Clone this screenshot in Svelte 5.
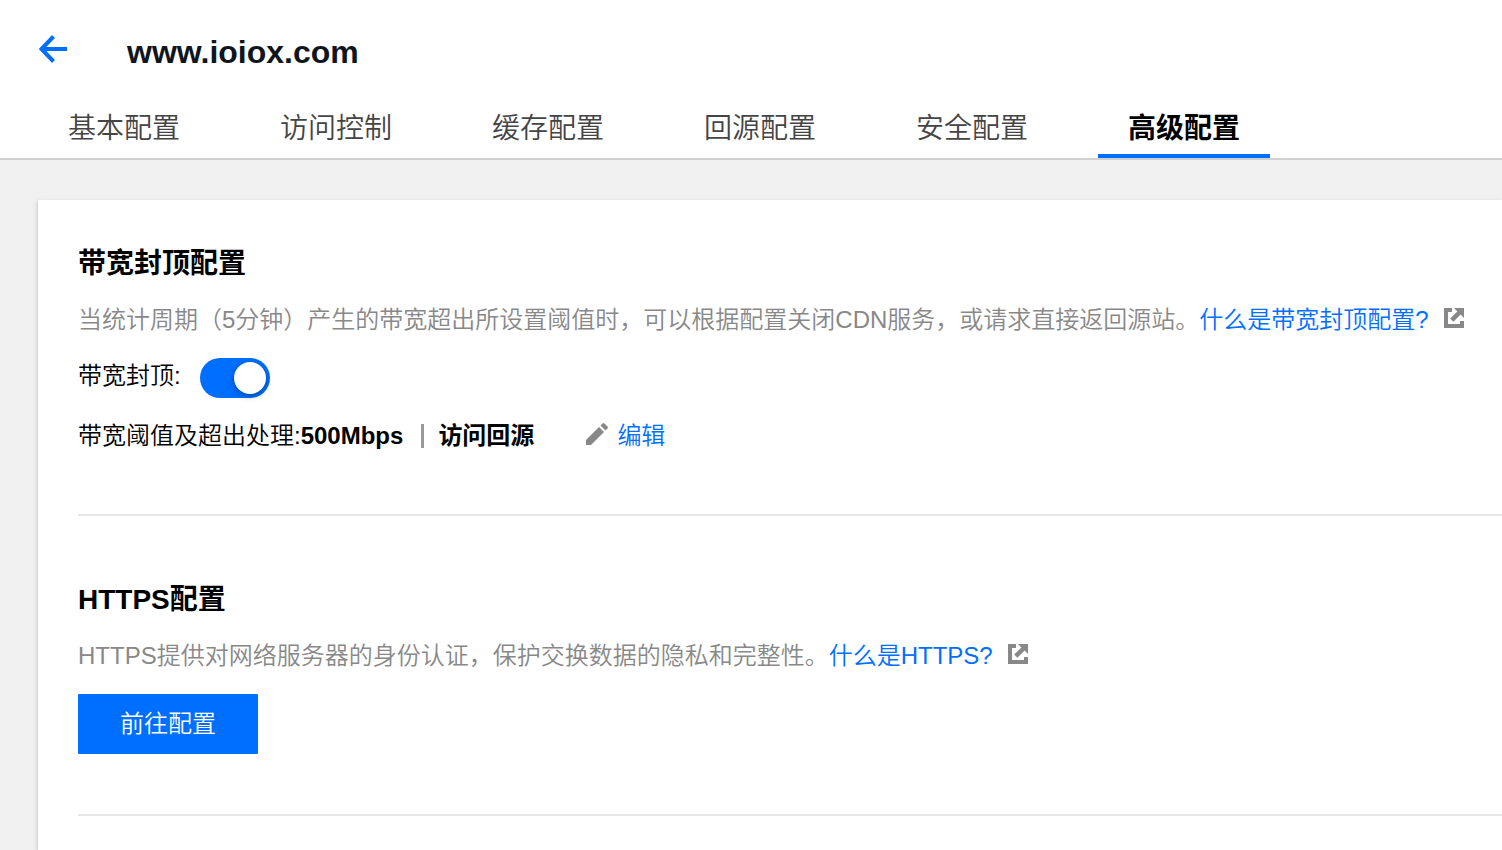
<script>
  const tabs = ['基本配置', '访问控制', '缓存配置', '回源配置', '安全配置', '高级配置'];
  let active = $state(5);
  let capped = $state(true);
</script>

{#snippet external()}
  <svg class="external" viewBox="0 0 20 20" width="20" height="20" aria-hidden="true">
    <path d="M0 0H8V4H4V16H16V13H20V20H0Z" />
    <path d="M10 0H20V10L16.6 6.600L9.400 13.800L6.200 10.600L13.400 3.400Z" />
  </svg>
{/snippet}

<div class="page">
  <header>
    <div class="heading">
      <button class="back" aria-label="返回">
        <svg viewBox="0 0 28 28" width="28" height="28" aria-hidden="true">
          <path d="M14.500 1.500L2.500 14L14.500 26.500M2.500 14H28" fill="none" stroke="currentColor" stroke-width="4" />
        </svg>
      </button>
      <h1>www.ioiox.com</h1>
    </div>
    <nav>
      {#each tabs as tab, i}
        <button class="tab" class:active={active === i} onclick={() => (active = i)}>{tab}</button>
      {/each}
    </nav>
  </header>

  <main>
    <section>
      <h2>带宽封顶配置</h2>
      <p class="desc">当统计周期（5分钟）产生的带宽超出所设置阈值时，可以根据配置关闭CDN服务，或请求直接返回源站。<a href="#bandwidth">什么是带宽封顶配置?{@render external()}</a></p>
      <div class="row switch-row">
        <label for="cap">带宽封顶:</label>
        <input id="cap" class="switch" type="checkbox" role="switch" bind:checked={capped} />
      </div>
      <div class="row">
        <span>带宽阈值及超出处理:</span><strong>500Mbps</strong>
        <span class="bar"></span>
        <strong>访问回源</strong>
        <button class="edit">
          <svg viewBox="0 0 22 22" width="22" height="22" aria-hidden="true">
            <path d="M0 22V17L13 4L18 9L5 22Z" />
            <path d="M14.500 2.500L16.500 0.500Q17.500 -0.300 18.500 0.500L21.500 3.500Q22.300 4.500 21.500 5.500L19.500 7.500Z" />
          </svg>编辑
        </button>
      </div>
    </section>

    <section>
      <h2>HTTPS配置</h2>
      <p class="desc">HTTPS提供对网络服务器的身份认证，保护交换数据的隐私和完整性。<a href="#https">什么是HTTPS?{@render external()}</a></p>
      <button class="primary">前往配置</button>
    </section>
  </main>
</div>

<style>
  :global(body) {
    margin: 0;
  }
  .page {
    display: flex;
    flex-direction: column;
    min-height: 100vh;
    background: #f0f0f0;
    color: #000;
    font-family: "Liberation Sans", "Noto Sans CJK SC", sans-serif;
    font-size: 24px;
    font-weight: 350;
    line-height: 36px;
  }
  button {
    padding: 0;
    border: 0;
    background: none;
    font: inherit;
    cursor: pointer;
  }
  h1, h2, p {
    margin: 0;
  }
  svg {
    fill: #888;
  }
  header {
    background: #fff;
    border-bottom: 2px solid #d0d0d0;
  }
  .heading {
    display: flex;
    align-items: center;
    gap: 60px;
    height: 98px;
    padding-left: 39px;
  }
  .back {
    display: flex;
    color: #006eff;
  }
  h1 {
    padding-top: 6px;
    color: #10151d;
    font-size: 32px;
  }
  nav {
    display: flex;
    gap: 40px;
    padding-left: 38px;
  }
  .tab {
    padding: 6px 30px 0;
    border-bottom: 4px solid transparent;
    color: #444;
    font-size: 28px;
    line-height: 50px;
    white-space: nowrap;
  }
  .tab.active {
    border-color: #006eff;
    color: #000;
    font-weight: 700;
  }
  main {
    flex: 1;
    margin: 40px 0 0 38px;
    padding-left: 40px;
    background: #fff;
    box-shadow: 0 2px 4px rgba(0, 0, 0, 0.25);
  }
  section {
    padding: 62px 0 60px;
    border-bottom: 2px solid #e8e8e8;
  }
  section:first-child {
    padding-top: 42px;
  }
  h2 {
    margin-bottom: 16px;
    font-size: 28px;
    line-height: 44px;
  }
  strong {
    font-weight: 700;
  }
  .desc {
    margin-bottom: 20px;
    color: #888;
  }
  a, .edit {
    color: #006eff;
    text-decoration: none;
  }
  .external {
    margin-left: 15px;
  }
  .row {
    display: flex;
    align-items: center;
  }
  .switch-row {
    align-items: flex-start;
    gap: 19px;
    margin-bottom: 20px;
  }
  .switch {
    appearance: none;
    display: flex;
    align-items: center;
    width: 70px;
    height: 40px;
    margin: 0;
    padding: 0 4px;
    box-sizing: border-box;
    border-radius: 20px;
    background: #bbb;
    cursor: pointer;
  }
  .switch::before {
    content: "";
    width: 32px;
    height: 32px;
    border-radius: 50%;
    background: #fff;
    box-shadow: 0 2px 6px rgba(0, 0, 0, 0.35);
  }
  .switch:checked {
    justify-content: flex-end;
    background: #006eff;
  }
  .bar {
    width: 3px;
    height: 24px;
    margin: 0 14px 0 18px;
    background: #999;
  }
  .edit {
    display: flex;
    align-items: center;
    gap: 9px;
    margin-left: 52px;
  }
  .edit svg {
    margin-bottom: 4px;
  }
  .primary {
    display: block;
    padding: 0 42px;
    border-radius: 1px;
    background: #006eff;
    color: #fff;
    line-height: 60px;
  }
</style>
